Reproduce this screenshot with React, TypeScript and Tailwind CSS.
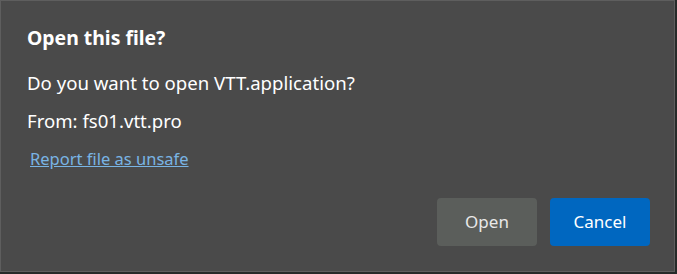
export default function App() {
  return (
    <div className="h-[274px] w-[677px] bg-[#262a29]" style={{ fontFamily: '"Noto Sans", "Open Sans", sans-serif' }}>
      <div className="flex h-[272px] w-[675px] flex-col border border-[#5e5e5e] bg-[#4a4a4a] pt-[25px] pr-[24px] pl-[26px] text-white">
        <h1 className="text-[19.4px] font-bold leading-[24px]">Open this file?</h1>
        <p className="mt-[21px] text-[18.6px] leading-[24px]">Do you want to open VTT.application?</p>
        <p className="mt-[14px] text-[18.6px] leading-[24px]">From: fs01.vtt.pro</p>
        <a href="#" className="mt-[14px] ml-[3px] self-start text-[16.5px] leading-[24px] text-[#79b4e4] underline">
          Report file as unsafe
        </a>
        <div className="mt-auto mb-[25px] flex justify-end gap-[13px]">
          <button className="h-[48px] w-[100px] rounded-[4px] bg-[#5b5e5b] text-[17px] text-[#e8e8e8]">Open</button>
          <button className="h-[48px] w-[100px] rounded-[4px] bg-[#0067c0] text-[17px] text-white">Cancel</button>
        </div>
      </div>
    </div>
  );
}
